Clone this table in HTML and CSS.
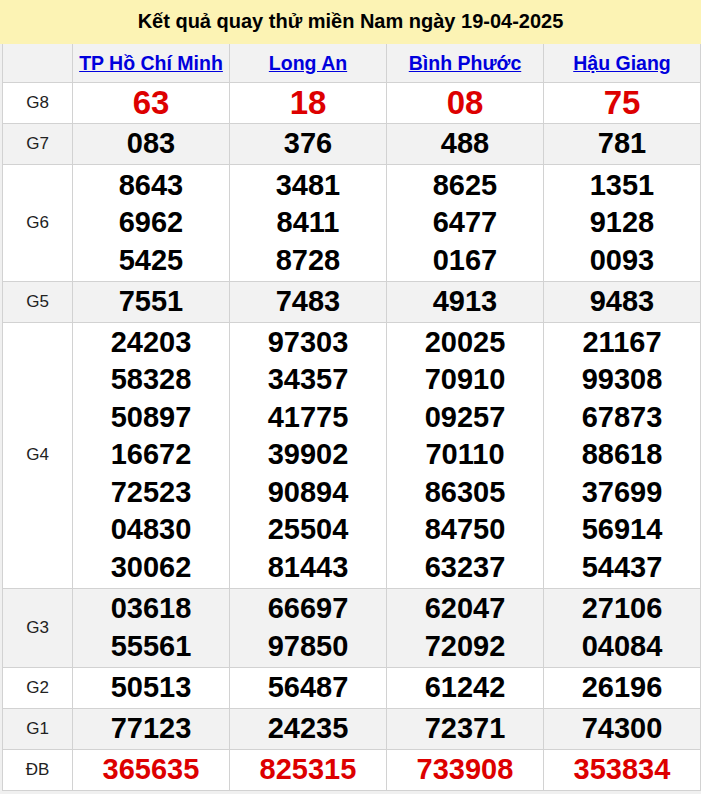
FILE: index.html
```html
<!DOCTYPE html>
<html lang="vi">
<head>
<meta charset="utf-8">
<title>Kết quả quay thử miền Nam</title>
<link rel="stylesheet" href="styles.css">
</head>
<body>
<div class="page">
  <div class="title">Kết quả quay thử miền Nam ngày 19-04-2025</div>
  <table class="kq">
    <colgroup>
      <col class="c-label"><col class="c-prov"><col class="c-prov"><col class="c-prov"><col class="c-prov">
    </colgroup>
    <thead>
      <tr class="head">
        <th></th>
        <th><a href="#">TP Hồ Chí Minh</a></th>
        <th><a href="#">Long An</a></th>
        <th><a href="#">Bình Phước</a></th>
        <th><a href="#">Hậu Giang</a></th>
      </tr>
    </thead>
    <tbody>
      <tr class="g8">
        <td class="lbl">G8</td>
        <td class="num">63</td><td class="num">18</td><td class="num">08</td><td class="num">75</td>
      </tr>
      <tr class="alt">
        <td class="lbl">G7</td>
        <td class="num">083</td><td class="num">376</td><td class="num">488</td><td class="num">781</td>
      </tr>
      <tr>
        <td class="lbl">G6</td>
        <td class="num">8643<br>6962<br>5425</td>
        <td class="num">3481<br>8411<br>8728</td>
        <td class="num">8625<br>6477<br>0167</td>
        <td class="num">1351<br>9128<br>0093</td>
      </tr>
      <tr class="alt">
        <td class="lbl">G5</td>
        <td class="num">7551</td><td class="num">7483</td><td class="num">4913</td><td class="num">9483</td>
      </tr>
      <tr>
        <td class="lbl">G4</td>
        <td class="num">24203<br>58328<br>50897<br>16672<br>72523<br>04830<br>30062</td>
        <td class="num">97303<br>34357<br>41775<br>39902<br>90894<br>25504<br>81443</td>
        <td class="num">20025<br>70910<br>09257<br>70110<br>86305<br>84750<br>63237</td>
        <td class="num">21167<br>99308<br>67873<br>88618<br>37699<br>56914<br>54437</td>
      </tr>
      <tr class="alt">
        <td class="lbl">G3</td>
        <td class="num">03618<br>55561</td>
        <td class="num">66697<br>97850</td>
        <td class="num">62047<br>72092</td>
        <td class="num">27106<br>04084</td>
      </tr>
      <tr>
        <td class="lbl">G2</td>
        <td class="num">50513</td><td class="num">56487</td><td class="num">61242</td><td class="num">26196</td>
      </tr>
      <tr class="alt">
        <td class="lbl">G1</td>
        <td class="num">77123</td><td class="num">24235</td><td class="num">72371</td><td class="num">74300</td>
      </tr>
      <tr class="db">
        <td class="lbl">ĐB</td>
        <td class="num">365635</td><td class="num">825315</td><td class="num">733908</td><td class="num">353834</td>
      </tr>
    </tbody>
  </table>
</div>
</body>
</html>
```

FILE: styles.css
```css
html, body {
  margin: 0;
  padding: 0;
}
body {
  background: #f0f0f0;
  font-family: "Liberation Sans", Arial, sans-serif;
  color: #000;
}
.page {
  width: 701px;
  overflow: hidden;
}
.title {
  height: 44px;
  background: #fcf3b4;
  font-size: 20px;
  font-weight: bold;
  color: #000;
  text-align: center;
  line-height: 42px;
}
.kq {
  border-collapse: collapse;
  margin-left: 2px;
  width: 698px;
  table-layout: fixed;
  background: #fff;
}
.c-label { width: 70px; }
.c-prov { width: 157px; }
.kq th, .kq td {
  border: 1px solid #d2d2d2;
  text-align: center;
  padding: 0;
}
.kq .head th {
  background: #f2f2f2;
  height: 38px;
  border-top: none;
}
.head th a {
  color: #0000dd;
  font-size: 19.5px;
  font-weight: bold;
  text-decoration: underline;
}
.kq td.lbl {
  font-size: 17px;
  color: #222;
}
.kq td.num {
  font-size: 29px;
  font-weight: bold;
  line-height: 37.5px;
  padding: 1.2px 0 1.5px;
}
.kq .alt td {
  background: #f2f2f2;
}
.kq .g8 td.num {
  color: #dd0000;
  font-size: 33px;
}
.kq .db td.num {
  color: #dd0000;
}
```
